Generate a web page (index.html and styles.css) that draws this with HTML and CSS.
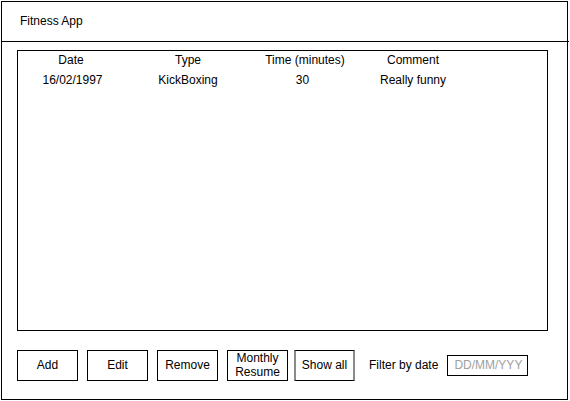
FILE: index.html
```
<!DOCTYPE html>
<html>
<head>
<meta charset="utf-8">
<link rel="stylesheet" href="styles.css">
</head>
<body>
<div class="app">
  <div class="header">Fitness App</div>
  <div class="table">
    <div class="row head">
      <div class="c1">Date</div>
      <div class="c2">Type</div>
      <div class="c3">Time (minutes)</div>
      <div class="c4">Comment</div>
    </div>
    <div class="row data">
      <div class="c1">16/02/1997</div>
      <div class="c2">KickBoxing</div>
      <div class="c3">30</div>
      <div class="c4">Really funny</div>
    </div>
  </div>
  <div class="toolbar">
    <button class="btn">Add</button>
    <button class="btn">Edit</button>
    <button class="btn">Remove</button>
    <button class="btn monthly">Monthly<br>Resume</button>
    <button class="btn showall">Show all</button>
    <span class="filter-label">Filter by date</span>
    <input class="date-input" type="text" placeholder="DD/MM/YYY">
  </div>
</div>
</body>
</html>
```
FILE: styles.css
```
* { box-sizing: border-box; }
html, body { margin: 0; padding: 0; background: #fff; }
body { font-family: "Liberation Sans", Arial, sans-serif; font-size: 12px; color: #000; }
.app {
  margin: 1px 0 0 1px;
  width: 567px;
  height: 399px;
  border: 1px solid #000;
}
.header {
  height: 40px;
  border-bottom: 1px solid #000;
  margin-right: -2px;
  padding-left: 18px;
  display: flex;
  align-items: center;
  padding-bottom: 2px;
}
.table {
  margin: 8px 0 0 15px;
  width: 531px;
  height: 281px;
  border: 1px solid #000;
}
.row {
  display: grid;
  grid-template-columns: 106px 128px 106px 110px;
  height: 20px;
  line-height: 18px;
  text-align: center;
}
.data .c1 { padding-left: 3px; }
.data .c3 { padding-right: 5px; }
.toolbar {
  margin: 19px 0 0 15px;
  display: flex;
  align-items: center;
}
.btn {
  width: 61px;
  height: 31px;
  margin-right: 9px;
  border: 1px solid #000;
  background: #fff;
  font-family: inherit;
  font-size: 12px;
  line-height: 14px;
  padding: 0 0 2px 0;
  color: #000;
}
.monthly { margin-right: 6px; }
.showall {
  border-left: 2px solid #8a8a8a;
  border-right: 2px solid #8a8a8a;
}
.filter-label {
  margin-left: 5px;
  margin-right: 9px;
  padding-bottom: 1px;
}
.date-input {
  width: 81px;
  height: 21px;
  border: 1px solid #000;
  font-family: inherit;
  font-size: 12px;
  padding: 0 0 1px 6px;
  outline: none;
}
.date-input::placeholder { color: #a0a0a0; }
```
